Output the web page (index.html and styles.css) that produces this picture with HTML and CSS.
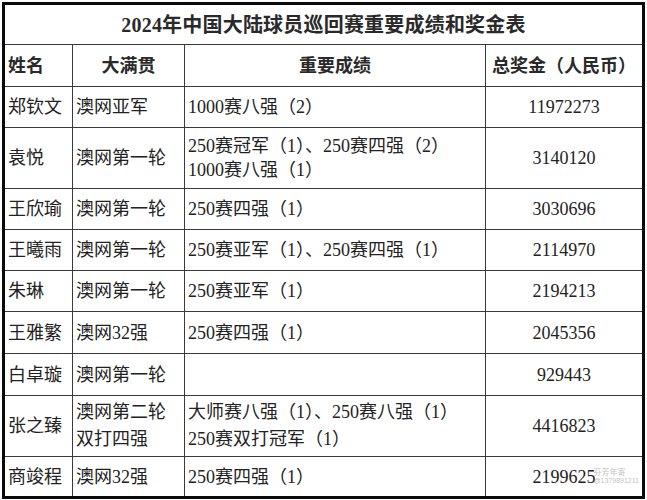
FILE: index.html
```html
<!DOCTYPE html>
<html lang="zh-CN">
<head>
<meta charset="utf-8">
<title>2024年中国大陆球员巡回赛重要成绩和奖金表</title>
<link rel="stylesheet" href="styles.css">
</head>
<body>
<div class="sheet">
  <div class="cell title">2024年中国大陆球员巡回赛重要成绩和奖金表</div>

  <div class="cell head left row-h">姓名</div>
  <div class="cell head center row-h">大满贯</div>
  <div class="cell head center row-h">重要成绩</div>
  <div class="cell head center row-h">总奖金（人民币）</div>

  <div class="cell left r1">郑钦文</div>
  <div class="cell left r1">澳网亚军</div>
  <div class="cell left r1">1000赛八强（2）</div>
  <div class="cell center r1">11972273</div>

  <div class="cell left r2">袁悦</div>
  <div class="cell left r2">澳网第一轮</div>
  <div class="cell left r2">250赛冠军（1）、250赛四强（2）<br>1000赛八强（1）</div>
  <div class="cell center r2">3140120</div>

  <div class="cell left r1">王欣瑜</div>
  <div class="cell left r1">澳网第一轮</div>
  <div class="cell left r1">250赛四强（1）</div>
  <div class="cell center r1">3030696</div>

  <div class="cell left r1">王曦雨</div>
  <div class="cell left r1">澳网第一轮</div>
  <div class="cell left r1">250赛亚军（1）、250赛四强（1）</div>
  <div class="cell center r1">2114970</div>

  <div class="cell left r1">朱琳</div>
  <div class="cell left r1">澳网第一轮</div>
  <div class="cell left r1">250赛亚军（1）</div>
  <div class="cell center r1">2194213</div>

  <div class="cell left r3">王雅繁</div>
  <div class="cell left r3">澳网32强</div>
  <div class="cell left r3">250赛四强（1）</div>
  <div class="cell center r3">2045356</div>

  <div class="cell left r3">白卓璇</div>
  <div class="cell left r3">澳网第一轮</div>
  <div class="cell left r3"></div>
  <div class="cell center r3">929443</div>

  <div class="cell left r2 wide">张之臻</div>
  <div class="cell left r2 wide">澳网第二轮<br>双打四强</div>
  <div class="cell left r2 wide">大师赛八强（1）、250赛八强（1）<br>250赛双打冠军（1）</div>
  <div class="cell center r2">4416823</div>

  <div class="cell left r4">商竣程</div>
  <div class="cell left r4">澳网32强</div>
  <div class="cell left r4">250赛四强（1）</div>
  <div class="cell center r4 last">2199625
    <div class="mark">
      <span class="mark-name">芬芳年寄</span>
      <span class="mark-id">@1379891211</span>
    </div>
  </div>
</div>
</body>
</html>
```

FILE: styles.css
```css
html, body {
  margin: 0;
  padding: 0;
  background: #ffffff;
}

body {
  padding: 2px 0 0 2px;
  font-family: "Liberation Serif", "Noto Sans CJK SC", serif;
  color: #222222;
}

.sheet {
  display: grid;
  grid-template-columns: 67px 111px 300px 156px;
  gap: 1px;
  width: 637px;
  background: #3a3a3a;
  border: 3px solid #0a0a0a;
}

.cell {
  background: #ffffff;
  display: flex;
  align-items: center;
  font-size: 18px;
  line-height: 24px;
  white-space: nowrap;
  overflow: hidden;
}

.left {
  padding-left: 3px;
  justify-content: flex-start;
}

.center {
  justify-content: center;
  text-align: center;
}

.title {
  grid-column: 1 / -1;
  height: 39px;
  justify-content: center;
  font-size: 20px;
  font-weight: 700;
  color: #2a2a2a;
  letter-spacing: 0.2px;
}

.head {
  font-weight: 700;
  font-size: 18px;
  color: #2a2a2a;
}

.row-h { height: 41px; }
.r1 { height: 40px; }
.r2 { height: 60px; }
.r3 { height: 41px; }
.r4 { height: 39px; }

.wide { line-height: 27px; }

.last {
  position: relative;
}

.mark {
  position: absolute;
  right: 3px;
  top: 10px;
  display: flex;
  flex-direction: column;
  align-items: flex-start;
  opacity: 0.6;
  pointer-events: none;
  color: #9a9a9a;
  line-height: 9px;
}

.mark-name {
  font-family: "Noto Sans CJK SC", sans-serif;
  font-size: 8px;
}

.mark-id {
  font-family: "Liberation Sans", sans-serif;
  font-size: 7px;
}
```
